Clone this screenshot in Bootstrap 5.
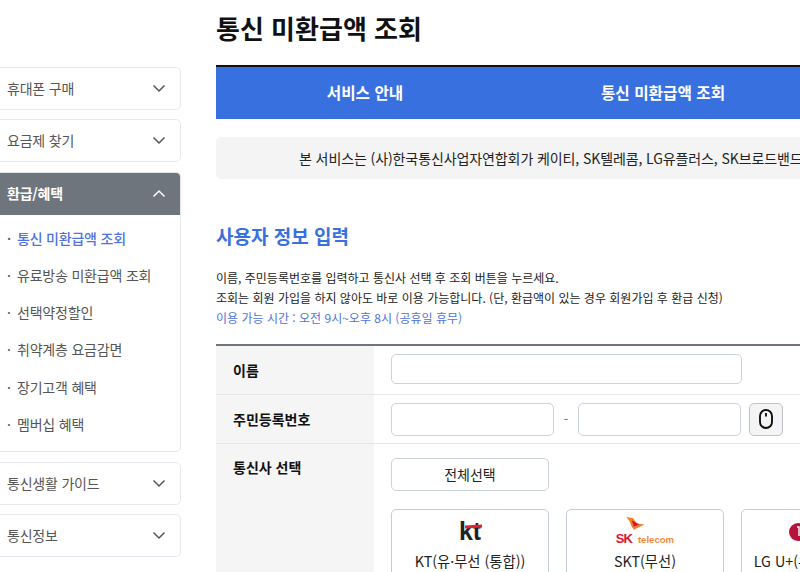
<!DOCTYPE html>
<html lang="ko">

<head>
  <meta charset="UTF-8" />
  <meta name="viewport" content="width=device-width, initial-scale=1" />
  <title>통신 미환급액 조회</title>
  <link href="https://cdn.jsdelivr.net/npm/bootstrap@5.3.3/dist/css/bootstrap.min.css" rel="stylesheet" />
  <style>
    html, body {
      height: 572px;
      overflow: hidden;
    }

    body {
      font-family: "Noto Sans CJK KR", "Noto Sans", sans-serif;
      font-size: 13px;
      color: #222;
      background: #fff;
    }

    .page-wrap {
      width: 1420px;
      margin-left: -11px;
      align-items: flex-start;
    }

    /* sidebar */
    .side-menu {
      width: 192px;
      flex: none;
      margin-top: 67px;
      margin-right: 35px;
    }

    .side-box {
      border: 1.5px solid #e6e9ef;
      border-radius: 5px;
      margin-bottom: 9.3px;
      overflow: hidden;
    }

    .side-head {
      height: 41px;
      padding: 0 14px 0 17px;
      font-size: 14px;
      letter-spacing: -0.2px;
      color: #555;
    }

    .side-box.is-open {
      border-color: #e3e6ec;
    }

    .side-box.is-open .side-head {
      height: 42px;
      background: #6e757d;
      color: #fff;
      font-weight: 700;
    }

    .side-sub {
      list-style: none;
      margin: 0;
      padding: 5px 0 8px 17px;
      font-size: 14px;
      letter-spacing: -0.2px;
      color: #555;
    }

    .side-sub li {
      height: 37.3px;
      line-height: 37.3px;
      white-space: nowrap;
    }

    .side-sub li::before {
      content: "·";
      display: inline-block;
      width: 10px;
    }

    .side-sub li.is-current {
      color: #4f73e0;
      font-weight: 500;
    }

    .side-sub li.is-current::before {
      color: #555;
    }

    /* content */
    .main-area {
      width: 1192px;
      flex: none;
    }

    .page-title {
      font-size: 26px;
      font-weight: 700;
      color: #111;
      line-height: 40px;
      margin: 8px 0 17px;
    }

    .tab-bar {
      border-top: 2px solid #111;
      background: #3870df;
      height: 54px;
    }

    .tab-bar a {
      width: 298px;
      color: #fff;
      font-size: 15.7px;
      font-weight: 700;
      text-decoration: none;
      text-align: center;
      line-height: 52px;
    }

    .notice-box {
      background: #f4f4f4;
      border-radius: 5px;
      height: 42px;
      line-height: 42px;
      margin-top: 18px;
      padding-left: 83px;
      font-size: 14px;
      letter-spacing: -0.1px;
      white-space: nowrap;
    }

    .section-title {
      font-size: 19px;
      font-weight: 700;
      color: #3870df;
      line-height: 28px;
      margin: 43px 0 18px;
    }

    .guide-text {
      font-size: 12px;
      line-height: 20px;
      margin-bottom: 16px;
    }

    .guide-text .hours {
      color: #4f73e0;
    }

    .form-grid {
      border-top: 2px solid #6e757d;
    }

    .form-row-line {
      border-bottom: 1px solid #e4e6ea;
    }

    .form-label-cell {
      width: 158px;
      height: 48px;
      flex: none;
      background: #f5f5f5;
      padding-left: 17px;
      font-size: 14px;
      font-weight: 700;
      color: #111;
    }

    .form-label-tall {
      height: 130px;
      padding-top: 13px;
      line-height: 20px;
    }

    .form-value-cell {
      padding-left: 17px;
    }

    .plain-input {
      height: 30px;
      border: 1.5px solid #cdd3dc;
      border-radius: 5px;
      background: #fff;
    }

    .name-input {
      width: 351px;
      margin-bottom: 2px;
    }

    .ssn-input {
      width: 163px;
      height: 33px;
    }

    .ssn-dash {
      width: 8px;
      color: #6e757d;
    }

    .mouse-btn {
      width: 34px;
      height: 33px;
      padding: 0;
      border: 1.5px solid #bfc3c9;
      border-radius: 5px;
      background: #f4f4f4;
    }

    .select-btn {
      width: 158px;
      height: 33px;
      padding: 0;
      border: 1.5px solid #cdd3dc;
      border-radius: 5px;
      background: #fff;
      font-size: 14px;
      color: #222;
    }

    .carrier-cell {
      padding-top: 14px;
    }

    .carrier-row {
      gap: 17px;
      margin-top: 18px;
    }

    .carrier-card {
      width: 158px;
      height: 90px;
      flex: none;
      border: 1.5px solid #c6ccd6;
      border-radius: 5px;
      text-align: center;
      font-size: 14.3px;
      color: #222;
    }

    .logo-slot {
      height: 33px;
      margin-top: 6px;
      margin-bottom: 1px;
    }

    .kt-logo {
      font-family: "Liberation Sans", sans-serif;
      font-weight: 700;
      font-size: 25px;
      line-height: 30px;
      color: #222;
      position: relative;
      display: inline-block;
    }

    .kt-logo::after {
      content: "";
      position: absolute;
      left: 6px;
      right: -1px;
      top: 9px;
      height: 3px;
      background: #e0232f;
      transform: rotate(-4deg);
    }

    .sk-logo {
      font-family: "Liberation Sans", sans-serif;
      line-height: 1;
      position: relative;
      display: inline-flex;
      align-items: flex-end;
      gap: 6px;
      height: 29px;
    }

    .sk-logo b {
      color: #d7152e;
      font-size: 13px;
      letter-spacing: -1px;
    }

    .sk-logo span {
      color: #ef8a3c;
      font-size: 9.6px;
      font-weight: 700;
    }

    .sk-logo svg {
      position: absolute;
      left: 10px;
      top: 1px;
    }

    .lg-mark {
      margin: 5px 44px 0 0;
    }
  </style>
</head>

<body>
  <div class="page-wrap d-flex">

    <!-- Sidebar -->
    <aside class="side-menu">
      <div class="side-box">
        <div class="side-head d-flex align-items-center justify-content-between">휴대폰 구매
          <svg width="14" height="9" viewBox="0 0 14 9" fill="none" stroke="#555" stroke-width="1.5"><path d="M1.5 1.5 7 7l5.5-5.5" /></svg>
        </div>
      </div>
      <div class="side-box">
        <div class="side-head d-flex align-items-center justify-content-between">요금제 찾기
          <svg width="14" height="9" viewBox="0 0 14 9" fill="none" stroke="#555" stroke-width="1.5"><path d="M1.5 1.5 7 7l5.5-5.5" /></svg>
        </div>
      </div>
      <div class="side-box is-open">
        <div class="side-head d-flex align-items-center justify-content-between">환급/혜택
          <svg width="14" height="9" viewBox="0 0 14 9" fill="none" stroke="#fff" stroke-width="1.5"><path d="M1.5 7.5 7 2l5.5 5.5" /></svg>
        </div>
        <ul class="side-sub">
          <li class="is-current">통신 미환급액 조회</li>
          <li>유료방송 미환급액 조회</li>
          <li>선택약정할인</li>
          <li>취약계층 요금감면</li>
          <li>장기고객 혜택</li>
          <li>멤버십 혜택</li>
        </ul>
      </div>
      <div class="side-box">
        <div class="side-head d-flex align-items-center justify-content-between">통신생활 가이드
          <svg width="14" height="9" viewBox="0 0 14 9" fill="none" stroke="#555" stroke-width="1.5"><path d="M1.5 1.5 7 7l5.5-5.5" /></svg>
        </div>
      </div>
      <div class="side-box">
        <div class="side-head d-flex align-items-center justify-content-between">통신정보
          <svg width="14" height="9" viewBox="0 0 14 9" fill="none" stroke="#555" stroke-width="1.5"><path d="M1.5 1.5 7 7l5.5-5.5" /></svg>
        </div>
      </div>
    </aside>

    <!-- Main -->
    <main class="main-area">
      <h1 class="page-title">통신 미환급액 조회</h1>

      <div class="tab-bar d-flex">
        <a href="#">서비스 안내</a>
        <a href="#">통신 미환급액 조회</a>
      </div>

      <div class="notice-box">본 서비스는 (사)한국통신사업자연합회가 케이티, SK텔레콤, LG유플러스, SK브로드밴드</div>

      <h2 class="section-title">사용자 정보 입력</h2>

      <div class="guide-text">
        이름, 주민등록번호를 입력하고 통신사 선택 후 조회 버튼을 누르세요.<br />
        조회는 회원 가입을 하지 않아도 바로 이용 가능합니다. (단, 환급액이 있는 경우 회원가입 후 환급 신청)<br />
        <span class="hours">이용 가능 시간 : 오전 9시~오후 8시 (공휴일 휴무)</span>
      </div>

      <div class="form-grid">
        <div class="form-row-line d-flex">
          <div class="form-label-cell d-flex align-items-center">이름</div>
          <div class="form-value-cell d-flex align-items-center">
            <input type="text" class="plain-input name-input" aria-label="이름" />
          </div>
        </div>
        <div class="form-row-line d-flex">
          <div class="form-label-cell d-flex align-items-center">주민등록번호</div>
          <div class="form-value-cell d-flex align-items-center">
            <input type="text" class="plain-input ssn-input" aria-label="주민등록번호 앞자리" />
            <span class="ssn-dash mx-2 text-center">-</span>
            <input type="password" class="plain-input ssn-input" aria-label="주민등록번호 뒷자리" />
            <button type="button" class="mouse-btn ms-2 d-flex align-items-center justify-content-center" aria-label="마우스 입력">
              <svg width="16" height="22" viewBox="0 0 16 22" fill="none" stroke="#111" stroke-width="1.9">
                <rect x="2" y="2" width="12" height="18" rx="6" />
                <path d="M8 5v3.5" />
              </svg>
            </button>
          </div>
        </div>
        <div class="d-flex">
          <div class="form-label-cell form-label-tall">통신사 선택</div>
          <div class="form-value-cell carrier-cell">
            <button type="button" class="select-btn d-block">전체선택</button>
            <div class="carrier-row d-flex">
              <div class="carrier-card">
                <div class="logo-slot"><span class="kt-logo">kt</span></div>
                KT(유·무선 (통합))
              </div>
              <div class="carrier-card">
                <div class="logo-slot">
                  <span class="sk-logo"><b>SK</b><span>telecom</span>
                    <svg width="20" height="15" viewBox="0 0 18 14"><path d="M0 0 6 1l4 5 7 1-10 5-2-3L3 4z" fill="#f0832a" /><path d="M5 3l7 4-5 2z" fill="#d7152e" /></svg>
                  </span>
                </div>
                SKT(무선)
              </div>
              <div class="carrier-card">
                <div class="logo-slot">
                  <svg class="lg-mark" width="18" height="18" viewBox="0 0 18 18"><circle cx="9" cy="9" r="9" fill="#b5123e" /><path d="M8 4h2v9" fill="none" stroke="#fff" stroke-width="1.4" /></svg>
                </div>
                LG U+(유·무선 (통합))
              </div>
            </div>
          </div>
        </div>
      </div>
    </main>
  </div>

  <script src="https://cdn.jsdelivr.net/npm/bootstrap@5.3.3/dist/js/bootstrap.bundle.min.js"></script>
</body>

</html>
